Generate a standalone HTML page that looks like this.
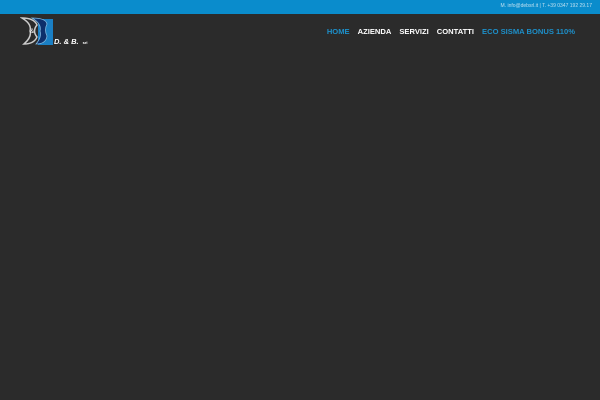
<!DOCTYPE html>
<html><head><meta charset="utf-8"><style>
html,body{margin:0;padding:0;width:600px;height:400px;background:#2b2b2b;overflow:hidden;font-family:"Liberation Sans",sans-serif}
.top{position:absolute;left:0;top:0;width:600px;height:14px;background:#0a8ccc;}
.top span{position:absolute;right:8px;top:3px;font-size:5px;color:#bfe0f0;white-space:nowrap}
.nav{position:absolute;top:27px;right:25px;display:flex;font-weight:bold;font-size:7.6px}
.nav div{margin-left:8px;color:#fff}
.nav .b{color:#1d8fc9}
.logo{position:absolute;left:20px;top:17px}
.lt{position:absolute;left:54px;top:37px;color:#fff;font-weight:bold;font-size:7.5px;font-style:italic;white-space:nowrap}
.lt small{font-size:4px;font-style:normal;margin-left:4px}
</style></head><body>
<div class="top"><span>M. info@debsrl.it | T. +39 0347 192 29.17</span></div>
<svg class="logo" width="34" height="28" viewBox="0 0 34 28">
<rect x="18" y="2" width="15" height="26" fill="#1a7fc4"/>
<path d="M2 1 Q14 1 17 8 Q12 14 17 20 Q14 27 4 27 Q12 20 10 14 Q12 7 2 1Z" fill="none" stroke="#ccc" stroke-width="1.5"/>
<path d="M12 1 Q26 1 27 7 Q24 13 27 19 Q26 27 16 27 Q22 20 20 14 Q22 7 12 1Z" fill="#0d2f6b" stroke="#7fb8e0" stroke-width=".8"/>
<text x="10" y="16" font-size="6" fill="#fff" font-family="Liberation Sans">&amp;</text>
</svg>
<div class="lt">D. &amp; B.<small>srl</small></div>
<div class="nav"><div class="b">HOME</div><div>AZIENDA</div><div>SERVIZI</div><div>CONTATTI</div><div class="b">ECO SISMA BONUS 110%</div></div>
</body></html>
